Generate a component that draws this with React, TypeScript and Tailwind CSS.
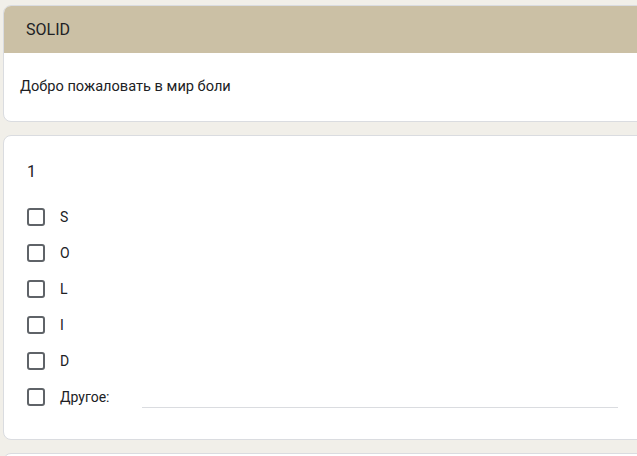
export default function App() {
  const options = ["S", "O", "L", "I", "D"];

  return (
    <div
      className="w-[637px] h-[456px] overflow-hidden bg-[#f1efe9] pl-[3px] pt-[5px]"
      style={{ fontFamily: "Roboto, 'Liberation Sans', sans-serif" }}
    >
      <div className="w-[680px] rounded-lg border border-[#dadce0] bg-white overflow-hidden">
        <div className="h-[47px] bg-[#cbc0a5] pl-[22px] flex items-center text-[16px] text-[#202124]">
          SOLID
        </div>
        <div className="h-[68px] pl-[16px] flex items-center text-[14.6px] text-[#202124]">
          Добро пожаловать в мир боли
        </div>
      </div>

      <div className="mt-[13px] w-[680px] h-[305px] rounded-lg border border-[#dadce0] bg-white pl-[23px] pt-[24px]">
        <div className="text-[16px] text-[#202124] leading-6">1</div>
        <div className="mt-[24px] flex flex-col gap-[18px]">
          {options.map((o) => (
            <div key={o} className="flex items-center h-[18px]">
              <div className="w-[18px] h-[18px] rounded-[3px] border-2 border-[#5f6368]" />
              <span className="ml-[15px] text-[14px] text-[#202124]">{o}</span>
            </div>
          ))}
          <div className="flex items-center h-[18px]">
            <div className="w-[18px] h-[18px] rounded-[3px] border-2 border-[#5f6368]" />
            <span className="ml-[15px] text-[14px] text-[#202124]">Другое:</span>
            <div className="ml-[33px] w-[476px] mt-[20px] border-b border-[#dadce0]" />
          </div>
        </div>
      </div>

      <div className="mt-[13px] w-[680px] h-[40px] rounded-lg border border-[#dadce0] bg-white" />
    </div>
  );
}
